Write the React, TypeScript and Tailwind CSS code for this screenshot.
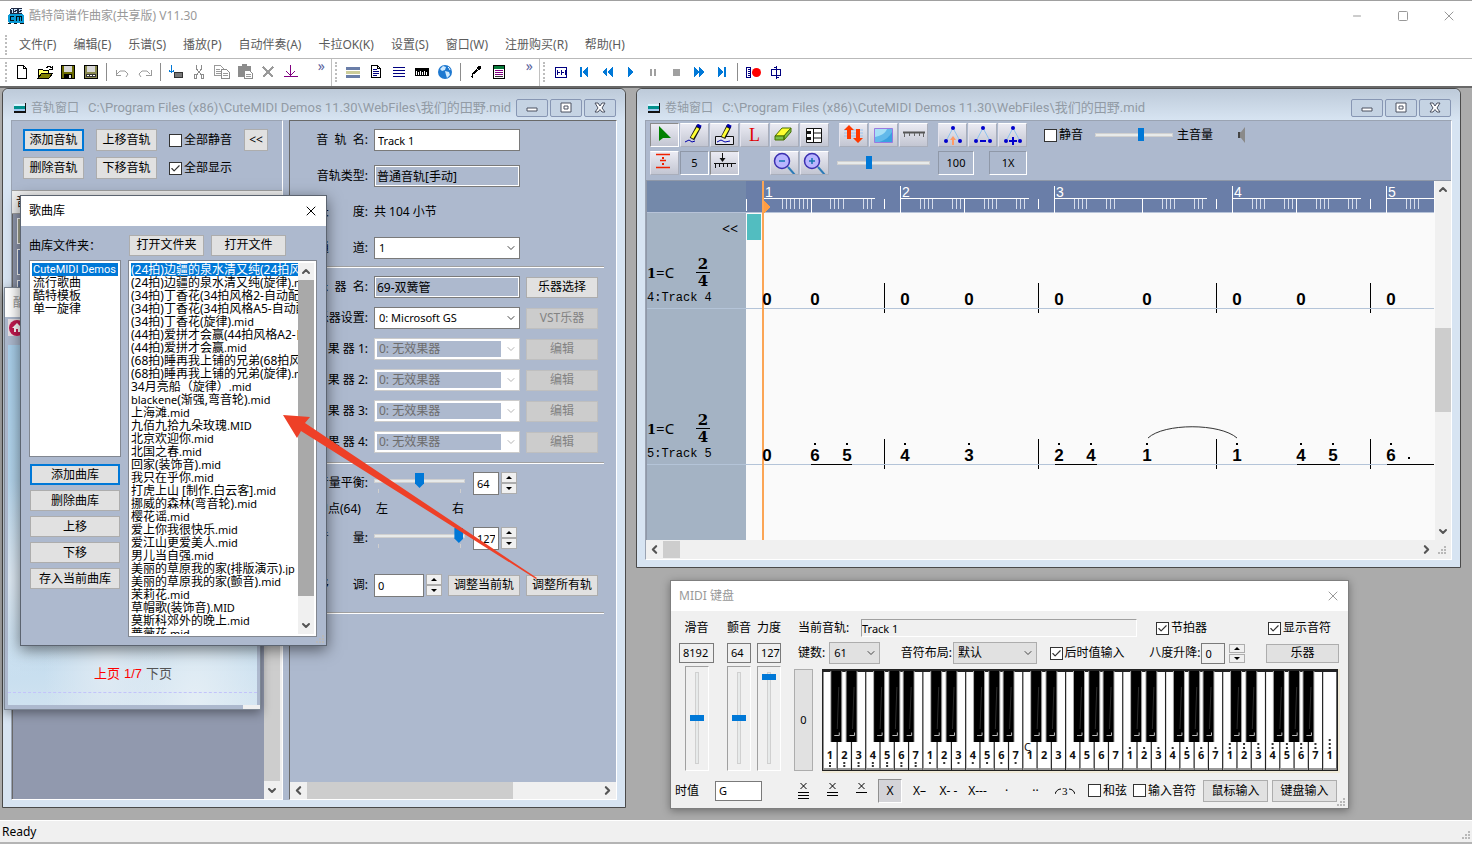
import { ReactNode } from "react";
import { ChevronDown, ChevronLeft, ChevronRight, ChevronUp, Check, Minus, Square, X } from "lucide-react";
import clsx from "clsx";
import { twMerge } from "tailwind-merge";

const MENUS = ["文件(F)", "编辑(E)", "乐谱(S)", "播放(P)", "自动伴奏(A)", "卡拉OK(K)", "设置(S)", "窗口(W)", "注册购买(R)", "帮助(H)"];

const FOLDERS = ["CuteMIDI Demos 1", "流行歌曲", "酷特模板", "单一旋律"];

const SONGS = [
  "(24拍)边疆的泉水清又纯(24拍风格).mid",
  "(24拍)边疆的泉水清又纯(旋律).mid",
  "(34拍)丁香花(34拍风格2-自动配器).mid",
  "(34拍)丁香花(34拍风格A5-自动配器).mid",
  "(34拍)丁香花(旋律).mid",
  "(44拍)爱拼才会赢(44拍风格A2-自动).mid",
  "(44拍)爱拼才会赢.mid",
  "(68拍)睡再我上铺的兄弟(68拍风格).mid",
  "(68拍)睡再我上铺的兄弟(旋律).mid",
  "34月亮船（旋律）.mid",
  "blackene(渐强,弯音轮).mid",
  "上海滩.mid",
  "九佰九拾九朵玫瑰.MID",
  "北京欢迎你.mid",
  "北国之春.mid",
  "回家(装饰音).mid",
  "我只在乎你.mid",
  "打虎上山 [制作.白云客].mid",
  "挪威的森林(弯音轮).mid",
  "樱花谣.mid",
  "爱上你我很快乐.mid",
  "爱江山更爱美人.mid",
  "男儿当自强.mid",
  "美丽的草原我的家(排版演示).jp",
  "美丽的草原我的家(颤音).mid",
  "茉莉花.mid",
  "草帽歌(装饰音).MID",
  "莫斯科郊外的晚上.mid",
  "蔷薇花.mid",
];

// x positions are measured from the left edge of the staff area
const BARS = [
  { n: 1, x: 17, end: 129, beat: 65, ticks: [36, 40, 44, 48, 53, 57, 61, 84, 88, 92, 97, 117, 121, 125] },
  { n: 2, x: 154, end: 283, beat: 218, ticks: [174, 178, 182, 186, 206, 210, 214, 238, 242, 246, 250, 270, 274, 278] },
  { n: 3, x: 308, end: 461, beat: 396, ticks: [328, 332, 336, 340, 360, 364, 368, 416, 420, 424, 428, 448, 452, 456] },
  { n: 4, x: 486, end: 615, beat: 550, ticks: [506, 510, 514, 518, 538, 542, 546, 570, 574, 578, 582, 602, 606, 610] },
  { n: 5, x: 640, end: 688, beat: 0, ticks: [660, 664, 668, 672] },
];
const BAR_LINES = [138, 292, 470, 624];
const RESTS = [21, 69, 159, 223, 313, 401, 491, 555, 645];
const NOTES: [number, string, boolean][] = [
  [21, "0", false], [69, "6", true], [101, "5", true], [159, "4", true], [223, "3", true], [313, "2", true],
  [345, "4", true], [401, "1", true], [491, "1", true], [555, "4", true], [587, "5", true], [645, "6", true],
];
const BEAMS = [[65, 106], [309, 351], [551, 594], [641, 688]];

const btn = "flex items-center justify-center border border-[#adadad] bg-[#e1e1e1] whitespace-nowrap";
const field = "border border-[#7a7a7a] bg-white px-[3px] text-[11px] min-w-0";
const btnOff = "w-[72px] h-[21px] bg-[#ccc] border-[#bfbfbf] text-[#838383]";

export default function App() {
  return (
    <div className="min-h-screen flex flex-col bg-white text-black text-[12px] leading-[16px] font-['Noto_Sans','Noto_Sans_CJK_SC',sans-serif] overflow-hidden">
      <TitleBar />
      <nav className="h-[28px] flex items-center border-b border-[#b9b9b9] pl-[5px] text-[#5c5c5c]">
        <Grip />
        <div className="flex gap-px pl-[4px]">
          {MENUS.map((m) => (
            <button key={m} className="px-2 whitespace-nowrap">{m}</button>
          ))}
        </div>
      </nav>
      <MainToolbar />

      {/* MDI desktop */}
      <main className="relative flex-1 min-h-[731px] overflow-hidden bg-[#ababab] border-t-2 border-[#696969]">
        <TrackWindow />
        <ScoreWindow />
        <KeyboardWindow />
        <BrowserWindow />
        <LibraryDialog />
        <svg className="absolute left-[280px] top-[324px] w-[262px] h-[170px] pointer-events-none" viewBox="0 0 262 170">
          <path d="M3 3 30 5 25 11 257 166 256 167 21 19 17 26Z" fill="#ee4027" />
        </svg>
      </main>

      <footer className="h-[24px] flex flex-col justify-between bg-[#f0f0f0] border-t border-white">
        <div className="flex justify-between">
          <span className="pl-[2px] pt-[2px] leading-[18px]">Ready</span>
          <SizeGrip />
        </div>
        <div className="h-[2px] bg-[#b4b4b4]" />
      </footer>
    </div>
  );
}

function TitleBar() {
  return (
    <header className="h-[31px] flex items-center border-t border-[#a0a0a0] pl-2 text-[#999]">
      <svg className="w-4 h-4 mr-[5px]" viewBox="0 0 16 16" shapeRendering="crispEdges">
        <path d="M3 0h11v6H2V3z" fill="#1f2a44" />
        <path d="M3 1h2v4H4V2H3zM6 1h3v1H7v1h2v2H6V4h2V3H6zM11 1h3v1h-2v1h2v2h-3V4h2V3h-2z" fill="#cfe8ff" />
        <path d="M1 6h14l1 2v6l-1 1H1l-1-1V8z" fill="#0b9bd6" />
        <path d="M2 8h4v1H3v3h3v1H2zM8 8h6v5h-1V9h-1v4h-1V9H9v4H8z" fill="#001018" />
        <path d="M0 15h3v1H0zM6 15h3v1H6zM12 15h4v1h-4z" fill="#111" />
      </svg>
      <h1 className="flex-1">酷特简谱作曲家(共享版) V11.30</h1>
      <button className="w-[46px] flex justify-center" aria-label="最小化"><Minus className="w-3 h-3" strokeWidth={2} /></button>
      <button className="w-[46px] flex justify-center" aria-label="最大化"><Square className="w-3 h-3" strokeWidth={2} /></button>
      <button className="w-[46px] flex justify-center" aria-label="关闭"><X className="w-4 h-4" strokeWidth={1.500} /></button>
    </header>
  );
}

function Grip() {
  return <span className="h-5 border-l-2 border-dotted border-[#bdbdbd]" />;
}

function Tool({ label, children }: { label: string; children: ReactNode }) {
  return (
    <button aria-label={label} className="w-[23px] h-[24px] flex items-center justify-center">
      <svg className="w-4 h-4" viewBox="0 0 16 16" fill="none" shapeRendering="crispEdges">{children}</svg>
    </button>
  );
}

function Sep() {
  return <span className="w-2 flex justify-center"><span className="h-[18px] w-px bg-[#8c8c8c]" /></span>;
}

function More() {
  return <button aria-label="更多" className="self-start text-[14px] leading-[14px] text-[#5a5f9c]">»</button>;
}

function MainToolbar() {
  return (
    <div className="h-[27px] flex items-center">
      <div className="w-[332px] h-full flex items-center border-r border-[#c0c0c0] pl-[5px] pb-px">
        <Grip />
        <div className="flex items-center pl-[3px] flex-1">
          <Tool label="新建"><path d="M3.500 1.500h6l3 3v10h-9zM9.500 1.500v3h3" stroke="#000" fill="#fff" /></Tool>
          <Tool label="打开">
            <path d="M1 5h4l1 1h5v3H5l-4 5z" fill="#ffff66" stroke="#000" />
            <path d="M1 14l4-5h11l-4 5z" fill="#808000" stroke="#000" />
            <path d="M9 3h1V2h3v1h1v1M15 2v3h-3" stroke="#000" />
          </Tool>
          <Tool label="保存">
            <path d="M1.500 1.500h13v13h-13z" fill="#6b6b00" stroke="#000" />
            <path d="M4 2h8v6H4z" fill="#d8d8d8" /><path d="M4 10h8v4H4z" fill="#000" /><path d="M9 11h2v3H9z" fill="#ddd" />
          </Tool>
          <Tool label="另存">
            <path d="M1.500 1.500h13v13h-13z" fill="#8a8a50" stroke="#000" />
            <path d="M4 2h8v6H4z" fill="#d8d8d8" /><path d="M3 10h10v3H3z" fill="#333" /><path d="M4 11h2v1H4zM7 11h2v1H7zM10 11h2v1h-2z" fill="#fff" />
          </Tool>
          <Sep />
          <Tool label="撤销"><path d="M2 6v5h5" stroke="#9a9a9a" /><path d="M3 10l3-3h5l3 3-2 3" stroke="#9a9a9a" shapeRendering="auto" /></Tool>
          <Tool label="重做"><path d="M14 6v5H9" stroke="#9a9a9a" /><path d="M13 10l-3-3H5l-3 3 2 3" stroke="#9a9a9a" shapeRendering="auto" /></Tool>
          <Sep />
          <Tool label="插入">
            <path d="M6.500 8.500h8v5h-8z" fill="#777" stroke="#333" />
            <path d="M3.500 1v8M1 6.500l2.500 2L6 6.500" stroke="#0078d7" />
          </Tool>
          <Tool label="剪切">
            <path d="M5.500 1v4l5 6M10.500 1v4l-5 6" stroke="#8c8c8c" />
            <path d="M3.500 10.500h2v4h-2zM10.500 10.500h2v4h-2z" stroke="#8c8c8c" />
          </Tool>
          <Tool label="复制">
            <path d="M.5 1.500h6l3 3v7h-9zM2 5h4M2 7h5M2 9h5" stroke="#9a9a9a" />
            <path d="M7.500 5.500h5l3 3v6h-8z" fill="#fff" stroke="#8c8c8c" /><path d="M9 9.500h5M9 11.500h5" stroke="#9a9a9a" />
          </Tool>
          <Tool label="粘贴">
            <path d="M1 2h13v11H1zM5 0h5v3H5z" fill="#8c8c8c" />
            <path d="M7.500 6.500h5l3 3v5h-8z" fill="#fff" stroke="#8c8c8c" /><path d="M9 10.500h5M9 12.500h5" stroke="#9a9a9a" />
          </Tool>
          <Tool label="删除"><path d="M3 3l10 10M13 3L3 13" stroke="#9a9a9a" strokeWidth="1.500" /></Tool>
          <Tool label="导出"><path d="M1 12.500h14M7.500 1v10M3.500 7.500l4 4 4-4" stroke="#800080" /></Tool>
        </div>
        <div className="h-full pr-[6px] flex"><More /></div>
      </div>
      <div className="w-[208px] h-full flex items-center border-r border-[#c0c0c0] pl-[3px] pb-px">
        <Grip />
        <div className="flex items-center pl-1 flex-1">
          <Tool label="音轨"><path d="M1 3h14v3H1z" fill="#6a7ea8" /><path d="M1 7h14v3H1z" fill="#cccc99" /><path d="M1 11h14v3H1z" fill="#6a7ea8" /></Tool>
          <Tool label="文档"><path d="M3.500 1.500h6l3 3v9h-9zM9.500 1.500v3h3" stroke="#000" /><path d="M5 5.500h4M5 7.500h6M5 9.500h6M5 11.500h4" stroke="#000080" /></Tool>
          <Tool label="歌词"><path d="M2 3.500h12M2 6.500h12M2 9.500h12M2 12.500h12" stroke="#000080" /></Tool>
          <Tool label="键盘"><path d="M1 4h14v8H1z" fill="#000" /><path d="M2 7h1v4H2zM4 8h1v3H4zM6 7h1v4H6zM8 8h1v3H8zM10 7h1v4h-1zM12 8h1v3h-1z" fill="#fff" /></Tool>
          <Tool label="网络">
            <circle cx="8" cy="8" r="7" fill="#1d78d0" shapeRendering="auto" />
            <path d="M3 5l3-3 3 1-1 3-3 1zM8 7l4 1 1 3-3 3-1-3z" fill="#cfeaff" shapeRendering="auto" />
            <path d="M11 3a6 6 0 012 3" stroke="#fff" shapeRendering="auto" />
          </Tool>
          <Sep />
          <Tool label="录音"><path d="M10 2h3v3h-1v1h-2V5H9V3h1zM8 5h1v1h1v1H9v1H8v1H7v1H5v4H4v-1H3v-1h1V9h1V8h1V7h1V6h1z" fill="#000" /></Tool>
          <Tool label="乐谱">
            <path d="M2.500 1.500h11v13h-11z" stroke="#000" /><path d="M3 2h10v3H3z" fill="#087a3a" />
            <path d="M4 6.500h8M4 8.500h8M4 10.500h8" stroke="#800080" /><path d="M4 12.500h8" stroke="#333" />
          </Tool>
        </div>
        <div className="h-full pr-[6px] flex"><More /></div>
      </div>
      <div className="h-full flex items-center pl-[3px] pb-px">
        <Grip />
        <div className="flex items-center pl-1">
          <Tool label="定位"><path d="M2.500 3.500h11v10h-11zM4 6v5M12 6v5M5 8.500h2M9 8.500h2M8 6v5" stroke="#000080" /></Tool>
          <Tool label="开头"><path d="M4 3h2v10H4zM12 3v10L6 8z" fill="#0078d7" /></Tool>
          <Tool label="快退"><path d="M8 3v10L3 8zM14 3v10L8 8z" fill="#0078d7" /></Tool>
          <Tool label="播放"><path d="M6 3v10l5-5z" fill="#0078d7" /></Tool>
          <Tool label="暂停"><path d="M5 5h2v7H5zM9 5h2v7H9z" fill="#a0a0a0" /></Tool>
          <Tool label="停止"><path d="M5 5h7v7H5z" fill="#a0a0a0" /></Tool>
          <Tool label="快进"><path d="M3 3v10l5-5zM8 3v10l6-5z" fill="#0078d7" /></Tool>
          <Tool label="结尾"><path d="M10 3h2v10h-2zM4 3v10l6-5z" fill="#0078d7" /></Tool>
          <Sep />
          <Tool label="录制"><path d="M1.500 3.500h4v10h-4zM3 5.500h2M3 7.500h2M3 9.500h2M3 11.500h2" stroke="#000080" /><circle cx="11.500" cy="8.500" r="4.500" fill="#f00" shapeRendering="auto" /></Tool>
          <Tool label="循环"><path d="M3.500 5.500h9v6h-9zM8.500 2v13M6 3.500h3M8 13.500h3" stroke="#000080" /></Tool>
        </div>
      </div>
    </div>
  );
}

function SizeGrip() {
  return (
    <svg className="w-[10px] h-[10px] self-end shrink-0" viewBox="0 0 10 10" fill="#b8b8b8" shapeRendering="crispEdges">
      <path d="M6 0h2v2H6zM3 3h2v2H3zM6 3h2v2H6zM0 6h2v2H0zM3 6h2v2H3zM6 6h2v2H6z" />
    </svg>
  );
}

function MdiWindow({ title, path, place, children }: { title: string; path: string; place: string; children: ReactNode }) {
  return (
    <section className={clsx("absolute flex flex-col border border-[#4a4a4a] rounded-t-[6px] bg-[#d7e4f2]", place)}>
      <div className="h-[31px] shrink-0 flex items-center pl-[11px] pr-[9px] pt-[6px] rounded-t-[6px] bg-gradient-to-b from-[#bdcad9] to-[#d7e4f2] text-[#929ba5]">
        <svg className="w-3 h-3 mr-[5px]" viewBox="0 0 12 12" shapeRendering="crispEdges">
          <path d="M0 2h11v2H0z" fill="#d8f4ff" /><path d="M0 4h11v3H0z" fill="#00908c" />
          <path d="M0 7h11v2H0z" fill="#9fc8f0" /><path d="M0 9h12v2H0zM11 1h1v10h-1z" fill="#111" />
        </svg>
        <h2 className="flex-1 flex gap-[9px] whitespace-nowrap">
          <span>{title}</span>
          <span className="text-[13px] font-['Roboto','Noto_Sans_CJK_SC',sans-serif]">{path}</span>
        </h2>
        <div className="flex gap-[2px]">
          {["最小化", "最大化", "关闭"].map((b, i) => (
            <button key={b} aria-label={b} className="w-8 h-[18px] flex items-center justify-center border border-[#8796b3] rounded-[2px] bg-[#c5d3e3]">
              <svg className="w-3 h-3" viewBox="0 0 12 12" fill="#fff" stroke="#4a5060">
                {i === 0 && <path d="M1 6h10v3H1z" />}
                {i === 1 && <path d="M1 1h10v9H1zM4 4h4v3H4z" />}
                {i === 2 && <path d="M1 1h3l2 3 2-3h3L8 6l3 4H8L6 7.500 4 10H1l3-4z" />}
              </svg>
            </button>
          ))}
        </div>
      </div>
      <div className="flex-1 min-h-0 flex pl-2 pr-2 pb-[7px]">{children}</div>
    </section>
  );
}

function VScroll({ className, thumb }: { className?: string; thumb: string }) {
  return (
    <div className={clsx("w-4 shrink-0 flex flex-col bg-[#f0f0f0] text-[#555]", className)}>
      <ChevronUp className="w-4 h-[17px] p-[2px]" strokeWidth={4} />
      <div className="flex-1 flex flex-col"><div className={twMerge("bg-[#cdcdcd]", thumb)} /></div>
      <ChevronDown className="w-4 h-[17px] p-[2px]" strokeWidth={4} />
    </div>
  );
}

function HScroll({ thumb }: { thumb: string }) {
  return (
    <div className="h-[17px] shrink-0 flex-1 flex bg-[#f0f0f0] text-[#555]">
      <ChevronLeft className="w-[17px] h-[17px] p-[2px]" strokeWidth={4} />
      <div className="flex-1 flex"><div className={clsx("bg-[#cdcdcd]", thumb)} /></div>
      <ChevronRight className="w-[17px] h-[17px] p-[2px]" strokeWidth={4} />
    </div>
  );
}

function CheckBox({ label, checked = false }: { label: string; checked?: boolean }) {
  return (
    <label className="flex items-center gap-[2px] whitespace-nowrap">
      <span className="grid w-[13px] h-[13px]">
        <input type="checkbox" defaultChecked={checked} className="peer appearance-none col-start-1 row-start-1 w-[13px] h-[13px] border border-[#333] bg-white" />
        <Check className="col-start-1 row-start-1 w-[13px] h-[13px] p-px text-[#333] invisible peer-checked:visible pointer-events-none" strokeWidth={2.5} />
      </span>
      {label}
    </label>
  );
}

function Drop({ id, value, disabled = false, gray = false, small = false, className }: { id: string; value: string; disabled?: boolean; gray?: boolean; small?: boolean; className?: string }) {
  return (
    <span className={twMerge("grid h-[22px] items-center border border-[#7a7a7a] bg-white", disabled && "border-[#ccc]", gray && "border-[#adadad] bg-[#e1e1e1]", className)}>
      <select
        id={id}
        disabled={disabled}
        className={twMerge(
          "appearance-none col-start-1 row-start-1 bg-transparent pl-[4px] h-[20px] leading-[16px] text-black",
          small && "text-[11px]",
          disabled && "h-[16px] ml-[2px] mr-[18px] pl-[2px] bg-[#adb9ce] text-[#6d6d6d] opacity-100",
        )}
      >
        <option>{value}</option>
      </select>
      <ChevronDown className={clsx("col-start-1 row-start-1 justify-self-end mr-[2px] w-3 h-3 pointer-events-none", disabled ? "text-[#b5b5b5]" : "text-[#444]")} />
    </span>
  );
}

function Spin({ narrow = false }: { narrow?: boolean }) {
  return (
    <span className={clsx("flex flex-col justify-between w-4 shrink-0", narrow ? "h-[19px]" : "h-[22px]")}>
      {["M1 4l3-3 3 3z", "M1 1l3 3 3-3z"].map((d, i) => (
        <button key={d} aria-label={i ? "减" : "加"} className={clsx("flex items-center justify-center border border-[#adadad] bg-[#f0f0f0]", narrow ? "h-[9px]" : "h-[11px]")}>
          <svg className="w-2 h-[5px]" viewBox="0 0 8 5"><path d={d} fill="#000" /></svg>
        </button>
      ))}
    </span>
  );
}

function HSlider({ label, value, max, width, thumb }: { label: string; value: number; max: number; width: string; thumb: "pin" | "bar" }) {
  return (
    <input
      type="range"
      aria-label={label}
      defaultValue={value}
      max={max}
      className={clsx(
        "appearance-none bg-transparent h-4 [&::-webkit-slider-runnable-track]:h-1 [&::-webkit-slider-runnable-track]:bg-[#e7eaea] [&::-webkit-slider-runnable-track]:border [&::-webkit-slider-runnable-track]:border-[#d0d0d0] [&::-webkit-slider-thumb]:appearance-none [&::-webkit-slider-thumb]:bg-[#0078d7]",
        width,
        thumb === "pin"
          ? "[&::-webkit-slider-thumb]:w-[9px] [&::-webkit-slider-thumb]:h-[15px] [&::-webkit-slider-thumb]:-mt-[7px] [&::-webkit-slider-thumb]:[clip-path:polygon(0_0,100%_0,100%_70%,50%_100%,0_70%)]"
          : "[&::-webkit-slider-thumb]:w-[6px] [&::-webkit-slider-thumb]:h-[13px] [&::-webkit-slider-thumb]:-mt-[6px]",
      )}
    />
  );
}

function TrackWindow() {
  return (
    <MdiWindow title="音轨窗口" path="C:\Program Files (x86)\CuteMIDI Demos 11.30\WebFiles\我们的田野.mid" place="left-[2px] top-0 w-[624px] h-[720px]">
      <div className="w-[272px] shrink-0 flex flex-col bg-[#adb9ce] border border-t-[#9aa3b2] border-l-[#9aa3b2] border-white">
        <div className="h-[69px] flex pl-[11px] pt-2 gap-3">
          {[["添加音轨", "删除音轨"], ["上移音轨", "下移音轨"]].map((col, i) => (
            <div key={i} className="flex flex-col gap-[6px]">
              {col.map((t) => (
                <button key={t} className={twMerge(btn, "w-[61px] h-[22px]", t === "添加音轨" && "border-2 border-[#0078d7]")}>{t}</button>
              ))}
            </div>
          ))}
          <div className="flex flex-col gap-3 pt-[3px]">
            <CheckBox label="全部静音" />
            <CheckBox label="全部显示" checked />
          </div>
          <button className={clsx(btn, "w-6 h-[22px]")}>&lt;&lt;</button>
        </div>
        <div className="h-6 bg-[#f0f0f0] border-y border-[#a0a0a0] px-1 leading-[22px]">音轨</div>
        <div className="flex-1 flex">
          <div className="flex-1 flex flex-col gap-[5px] p-1 bg-[#9199ae] border-l border-[#696969]">
            <div className="h-[26px] w-[120px] border border-white bg-[#a4a68f]" />
            <div className="h-[26px] w-[120px] border border-white bg-[#6a7ea8]" />
            <div className="h-[26px] w-[120px] border border-white bg-[#6a7ea8]" />
          </div>
          <VScroll thumb="h-[550px]" />
          <div className="w-[2px] bg-[#f0f0f0]" />
        </div>
      </div>
      <div className="w-[6px] shrink-0 bg-[#adb9ce]" />
      <TrackForm />
    </MdiWindow>
  );
}

function Row({ label, id, children }: { label: string; id?: string; children: ReactNode }) {
  return (
    <div className="h-[22px] flex items-center gap-[6px]">
      <label htmlFor={id} className="w-[78px] shrink-0 text-right whitespace-pre">{label}</label>
      {children}
    </div>
  );
}

function Groove() {
  return <hr className="w-[314px] shrink-0 border-t border-t-[#a0a0a0] border-b border-b-white h-[2px]" />;
}

function TrackForm() {
  return (
    <div className="flex-1 min-w-0 flex flex-col bg-[#adb9ce] border border-t-[#696969] border-l-[#696969] border-white">
      <div className="flex flex-col gap-[14px] pt-2 pb-[7px]">
        <Row id="name" label="音  轨  名:"><input id="name" defaultValue="Track 1" className={clsx(field, "w-[146px] h-[22px]")} /></Row>
        <Row id="kind" label="音轨类型:"><input id="kind" readOnly defaultValue="普通音轨[手动]" className="w-[146px] h-[22px] px-[2px] border border-[#7a7a7a] bg-[#adb9ce] shadow-[inset_0_0_0_1px_white]" /></Row>
        <Row label="长　　度:"><span>共 104 小节</span></Row>
        <Row id="channel" label="通　　道:"><Drop id="channel" value="1" small className="w-[146px]" /></Row>
      </div>
      <Groove />
      <div className="flex flex-col gap-[9px] pt-2 pb-[9px]">
        <Row id="inst" label="乐  器  名:">
          <input id="inst" readOnly defaultValue="69-双簧管" className="w-[146px] h-[22px] px-[2px] border border-[#7a7a7a] bg-[#adb9ce] shadow-[inset_0_0_0_1px_white]" />
          <button className={clsx(btn, "w-[72px] h-[21px]")}>乐器选择</button>
        </Row>
        <Row id="device" label="乐器设置:">
          <Drop id="device" value="0: Microsoft GS" small className="w-[146px]" />
          <button disabled className={twMerge(btn, btnOff)}>VST乐器</button>
        </Row>
        {[1, 2, 3, 4].map((n) => (
          <Row key={n} id={`fx${n}`} label={`效 果 器 ${n}:`}>
            <Drop id={`fx${n}`} value="0: 无效果器" disabled className="w-[146px]" />
            <button disabled className={twMerge(btn, btnOff)}>编辑</button>
          </Row>
        ))}
      </div>
      <Groove />
      <div className="flex flex-col pt-2 pb-4">
        <Row label="音量平衡:">
          <Level label="音量平衡" value={64} />
        </Row>
        <div className="h-[33px] flex items-center pl-[26px] pb-1">
          <span className="w-[60px]">中点(64)</span>
          <span className="w-[76px]">左</span>
          <span>右</span>
        </div>
        <Row label="音　　量:">
          <Level label="音量" value={127} />
        </Row>
        <div className="h-[25px]" />
        <Row id="shift" label="移　　调:">
          <div className="flex gap-[2px]">
            <input id="shift" defaultValue="0" className={clsx(field, "w-[50px] h-[23px]")} />
            <Spin />
          </div>
          <button className={clsx(btn, "w-[72px] h-[21px]")}>调整当前轨</button>
          <button className={clsx(btn, "w-[72px] h-[21px]")}>调整所有轨</button>
        </Row>
      </div>
      <Groove />
      <div className="mt-auto flex"><HScroll thumb="w-[206px]" /></div>
    </div>
  );
}

function Level({ label, value }: { label: string; value: number }) {
  return (
    <>
      <div className="flex flex-col w-[91px]">
        <HSlider label={label} value={value} max={128} width="w-[91px]" thumb="pin" />
        <div className="flex justify-between px-1">
          <span className="w-px h-1 bg-[#d0cfcf]" />
          <span className="w-px h-1 bg-[#d0cfcf]" />
        </div>
      </div>
      <div className="flex gap-[2px] pl-[2px]">
        <input aria-label={label} defaultValue={value} className={clsx(field, "w-[26px] h-[23px]")} />
        <Spin />
      </div>
    </>
  );
}

function IconButton({ label, on = false, children }: { label: string; on?: boolean; children: ReactNode }) {
  return (
    <button
      aria-label={label}
      className={clsx(
        "w-[29px] h-6 flex items-center justify-center bg-gradient-to-b from-[#ebebf3] to-[#c3c6d2] border",
        on ? "border-t-[#8a8a8a] border-l-[#8a8a8a] border-white" : "border-t-white border-l-[#e4e4ee] border-[#a9aebb]",
      )}
    >
      <svg className="w-[27px] h-[22px]" viewBox="0 0 27 22" fill="none">{children}</svg>
    </button>
  );
}

function Triplet({ children }: { children: ReactNode }) {
  return (
    <>
      <path d="M14 4L7 17M14 4l7 13" stroke="#8fc3ee" />
      <circle cx="14" cy="4" r="2" fill="#00c" /><circle cx="7" cy="17" r="2" fill="#00c" /><circle cx="21" cy="17" r="2" fill="#00c" />
      {children}
    </>
  );
}

function Magnifier({ plus = false }: { plus?: boolean }) {
  return (
    <>
      <path d="M17 15l7 8" stroke="#2b7bb8" strokeWidth="2" />
      <circle cx="11" cy="9" r="7.500" fill="#b9b5ff" stroke="#3a2fb0" strokeWidth="1.500" />
      <path d={plus ? "M8 9h6M11 6v6" : "M8 9h6"} stroke="#1474b0" strokeWidth="1.500" />
    </>
  );
}

function ScoreWindow() {
  return (
    <MdiWindow title="卷轴窗口" path="C:\Program Files (x86)\CuteMIDI Demos 11.30\WebFiles\我们的田野.mid" place="left-[636px] top-0 w-[825px] h-[480px]">
      <div className="flex-1 min-w-0 flex flex-col border border-t-[#9aa3b2] border-l-[#9aa3b2] border-white bg-[#f0f0f0]">
        <div className="h-[60px] shrink-0 flex flex-col gap-1 pl-1 pt-[2px] bg-[#adb9ce] border-b border-[#8f98a8]">
          <div className="h-6 flex items-center gap-[10px]">
            <div className="flex gap-px">
              <IconButton label="选择" on><path d="M8 2v15l4-3 8 0z" fill="#008000" /></IconButton>
              <IconButton label="铅笔"><path d="M18 2l-7 13" stroke="#111" strokeWidth="5" /><path d="M17 4l-6 10" stroke="#ff3" strokeWidth="3" /><path d="M16 1l4 2" stroke="#00a" strokeWidth="3" /><path d="M4 18l4-2 3 2 3-1" stroke="#00a" /></IconButton>
              <IconButton label="画框"><path d="M4.500 12.500h18v8h-18z" stroke="#111" fill="#e4e4ee" /><path d="M18 2l-6 12" stroke="#111" strokeWidth="5" /><path d="M17 4l-5 9" stroke="#ff3" strokeWidth="3" /><path d="M16 1l4 2" stroke="#00a" strokeWidth="3" /><path d="M6 18l4-2 4 2 5-1" stroke="#00a" /></IconButton>
              <IconButton label="歌词"><text x="8" y="17" fontSize="18" fontFamily="Liberation Serif" fill="#e00000">L</text></IconButton>
              <IconButton label="橡皮"><path d="M4 12l7-8h9l-7 8z" fill="#ffff30" stroke="#487000" /><path d="M4 12h9v4H4zM13 12l7-8v4l-7 8z" fill="#7bbf4a" stroke="#487000" /></IconButton>
              <IconButton label="琴键"><path d="M5.500 4.500h15v14h-15z" fill="#fff" stroke="#111" /><path d="M12.500 4v14M13 9h8M13 14h8" stroke="#111" /><path d="M5 7h5v3H5zM5 13h5v3H5z" fill="#111" /></IconButton>
            </div>
            <div className="flex gap-px">
              <IconButton label="上下移"><path d="M4 6h19M4 9h19M4 12h19" stroke="#9cc4ee" /><path d="M9 1l5 5h-3v9H7V6H4zM18 19l-5-5h3V5h4v9h3z" fill="#ff3a00" /></IconButton>
              <IconButton label="背景"><path d="M4.500 4.500h18v14h-18z" fill="#62b9ea" stroke="#9a7ae0" /><path d="M5 5h12c-2 5-7 7-12 8z" fill="#a5dff6" /><path d="M22 8v10H9c7-2 10-5 13-10z" fill="#3aa0e0" /></IconButton>
              <IconButton label="标尺"><path d="M3 8.500h22" stroke="#555" strokeWidth="2" /><path d="M4.500 9v4M9.500 9v3M14.500 9v3M19.500 9v3M23.500 9v4" stroke="#666" /></IconButton>
            </div>
            <div className="flex gap-px">
              <IconButton label="移动"><Triplet><path d="M14 12l3 4h-2v5h-2v-5h-2z" fill="#ff9a66" /></Triplet></IconButton>
              <IconButton label="减少"><Triplet><path d="M11 17h6" stroke="#00c" strokeWidth="2" /></Triplet></IconButton>
              <IconButton label="增加"><Triplet><path d="M10 17h8M14 13v8" stroke="#00c" strokeWidth="2" /></Triplet></IconButton>
            </div>
            <div className="flex items-center gap-3 pl-[7px]">
              <CheckBox label="静音" />
              <div className="flex items-center gap-1">
                <HSlider label="主音量" value={60} max={100} width="w-[78px]" thumb="bar" />
                <span>主音量</span>
              </div>
            </div>
            <svg className="w-4 h-4 ml-3" viewBox="0 0 16 16"><path d="M3 5h3l4-5v16l-4-5H3z" fill="#8a8a8a" /><path d="M3 5h2v6H3z" fill="#444" /></svg>
          </div>
          <div className="h-[24px] flex items-center">
            <div className="flex gap-px">
              <IconButton label="行距"><path d="M5 2.500h14M9 8.500h6M5 15.500h14" stroke="#f02000" strokeWidth="1.500" /><path d="M11 5h2v2h-2zM11 11h2v2h-2z" fill="#f02000" /></IconButton>
              <span className="w-[29px] flex items-center justify-center border border-t-[#8f98a8] border-l-[#8f98a8] border-white text-[11px]">5</span>
              <IconButton label="拍点" on><path d="M3 11.500h22M4.500 12v4M8.500 12v3M12.500 12v3M16.500 12v3M20.500 12v3" stroke="#111" /><path d="M11.500 1v6" stroke="#111" /><path d="M8.500 6h6l-3 4z" fill="#111" /></IconButton>
            </div>
            <div className="flex gap-px pl-[31px]">
              <IconButton label="缩小"><Magnifier /></IconButton>
              <IconButton label="放大"><Magnifier plus /></IconButton>
            </div>
            <div className="flex items-center gap-2 pl-2 text-[11px]">
              <HSlider label="缩放" value={33} max={100} width="w-[93px]" thumb="bar" />
              <span className="w-9 h-6 flex items-center justify-center border border-t-[#8f98a8] border-l-[#8f98a8] border-white">100</span>
              <span className="w-[38px] ml-[7px] h-6 flex items-center justify-center border border-t-[#8f98a8] border-l-[#8f98a8] border-white">1X</span>
            </div>
          </div>
        </div>
        <div className="flex-1 flex min-h-0">
          <div className="w-[100px] shrink-0 flex flex-col bg-[#a4b3c4] border-l border-[#8f98a8]">
            <div className="h-8 bg-[#7489aa] border-b border-[#b7c3d8]" />
            <div className="h-7 flex items-end justify-end pr-2 text-[14px] leading-[24px]">&lt;&lt;</div>
            <TrackHead name="4:Track 4" className="h-[68px]" />
            <TrackHead name="5:Track 5" className="h-[156px]" />
          </div>
          <Score />
          <VScroll thumb="h-[84px] mt-[130px]" />
        </div>
        <div className="flex h-[19px] pt-px">
          <HScroll thumb="w-[17px]" />
          <div className="w-4 flex justify-center pb-[3px]"><SizeGrip /></div>
        </div>
      </div>
    </MdiWindow>
  );
}

function TrackHead({ name, className }: { name: string; className: string }) {
  return (
    <div className={clsx("flex flex-col justify-end border-b border-[#b4c4d8]", className)}>
      <div className="flex items-center gap-[15px]">
        <span className="w-[34px] text-[15px]"><b className="font-['DejaVu_Serif',serif] text-[13px]">1</b>=C</span>
        <span className="w-[14px] flex flex-col items-center font-['DejaVu_Serif',serif] font-bold text-[15px] leading-[16px]">
          <span className="border-b border-black w-full text-center">2</span>
          <span>4</span>
        </span>
      </div>
      <span className="pt-px pb-[2px] font-['Liberation_Mono',monospace] text-[12px]">{name}</span>
    </div>
  );
}

function Score() {
  return (
    <div className="flex-1 min-w-0 overflow-hidden bg-[#fafafa]">
      <svg className="w-[688px] h-[360px]" viewBox="0 0 688 360" shapeRendering="crispEdges">
        <rect width="688" height="31" fill="#6a7ea8" />
        <rect y="31" width="688" height="1" fill="#b7c3d8" />
        <path d="M.5 18v12" stroke="#fff" />
        {BARS.map((b) => (
          <g key={b.n} stroke="#fff">
            <path d={`M${b.x + 0.5} 5v27M${b.x} 17.500H${b.end}`} />
            {b.beat > 0 && <path d={`M${b.beat + 0.5} 18v14`} />}
            {b.ticks.map((t) => <path key={t} d={`M${t + 0.5} 18v10`} stroke="#d5dceb" />)}
            <text x={b.x + 2} y="16" fontSize="14" fontFamily="Liberation Sans" fill="#fff" stroke="none">{b.n}</text>
          </g>
        ))}
        {BAR_LINES.map((x) => (
          <g key={x}>
            <path d={`M${x + 0.5} 18v10`} stroke="#fff" />
            <path d={`M${x + 0.5} 102v30M${x + 0.5} 258v30`} stroke="#000" />
          </g>
        ))}
        <rect x="1" y="33" width="14" height="26" fill="#52bdc0" />
        <path d="M0 127.500h688M0 283.500h688" stroke="#b4c4d8" />
        <rect x="16" width="2" height="360" fill="#fba555" />
        <path d="M18 20l6 6-6 6z" fill="#ff9d42" />
        <g fontFamily="Liberation Sans" fontWeight="bold" fontSize="17" textAnchor="middle" fill="#000">
          {RESTS.map((x) => <text key={x} x={x} y="124">0</text>)}
          {NOTES.map(([x, n, dot]) => (
            <g key={x}>
              <text x={x} y="280">{n}</text>
              {dot && <rect x={x - 1} y="262" width="2" height="2" />}
            </g>
          ))}
        </g>
        <rect x="662" y="276" width="2" height="2" />
        {BEAMS.map(([a, b]) => <path key={a} d={`M${a} 283.500H${b}`} stroke="#000" />)}
        <path d="M402 257c16-15 72-15 89 0" fill="none" stroke="#333" shapeRendering="auto" />
      </svg>
    </div>
  );
}

function VSlider({ label, value, max }: { label: string; value: number; max: number }) {
  return (
    <div className="h-[105px] w-6 flex justify-center py-[5px] border border-t-[#a0a0a0] border-l-[#a0a0a0] border-white">
      <input
        type="range"
        aria-label={label}
        defaultValue={value}
        max={max}
        className="appearance-none bg-transparent w-[14px] h-[92px] [writing-mode:vertical-lr] [direction:rtl] [&::-webkit-slider-runnable-track]:w-1 [&::-webkit-slider-runnable-track]:bg-[#e7eaea] [&::-webkit-slider-runnable-track]:border [&::-webkit-slider-runnable-track]:border-[#d0d0d0] [&::-webkit-slider-thumb]:appearance-none [&::-webkit-slider-thumb]:w-[14px] [&::-webkit-slider-thumb]:h-[6px] [&::-webkit-slider-thumb]:-ml-[6px] [&::-webkit-slider-thumb]:bg-[#0078d7]"
      />
    </div>
  );
}

const BLACK_AFTER = [0, 1, 3, 4, 5];
const KEY_W = 514 / 36;

function Piano() {
  const keys = Array.from({ length: 36 }, (_, i) => i);
  return (
    <svg className="w-[518px] h-[104px] shrink-0" viewBox="0 0 518 104">
      <rect width="518" height="104" fill="#f0ead8" />
      <rect width="516" height="102" fill="#222" />
      {keys.map((i) => {
        const x = 1 + i * KEY_W;
        const octave = Math.floor(i / 7);
        const dots = Math.abs(octave - 2);
        return (
          <g key={i}>
            <rect x={x + 0.5} y="3" width={KEY_W - 1.2} height="98" fill="#fff" />
            <rect x={x + 0.5} y="99" width={KEY_W - 1.2} height="2" fill="#999" />
            <text x={x + 7} y="90" textAnchor="middle" fontSize="11" fontWeight="bold" fontFamily="Noto Sans" fill="#111">{(i % 7) + 1}</text>
            {Array.from({ length: dots }, (_, d) => (
              <rect key={d} x={x + 6} y={octave < 2 ? 93 + d * 3 : 78 - d * 4} width="2" height="2" fill="#333" />
            ))}
          </g>
        );
      })}
      {keys.filter((i) => i < 35 && BLACK_AFTER.includes(i % 7)).map((i) => {
        const x = 1 + (i + 1) * KEY_W - (i % 7 === 0 || i % 7 === 3 ? 6 : 5);
        return (
          <g key={i}>
            <rect x={x - 1} y="2" width="12" height="71" fill="#aaa" />
            <rect x={x} y="2" width="10" height="71" fill="#000" />
            <path d={`M${x + 7.5} 18L${x + 6} 60`} stroke="#2c2c2c" />
            <path d={`M${x + 3} 66.500h5v-3`} stroke="#bbb" fill="none" />
          </g>
        );
      })}
      <text x="202" y="82" fontSize="11" fontFamily="Noto Sans" fill="#111">C</text>
    </svg>
  );
}

const DURATIONS: { label: string; lines?: number; text?: string; on?: boolean }[] = [
  { label: "三十二分", lines: 3 },
  { label: "十六分", lines: 2 },
  { label: "八分", lines: 1 },
  { label: "四分", text: "X", on: true },
  { label: "二分", text: "X–" },
  { label: "附点二分", text: "X- -" },
  { label: "全音符", text: "X---" },
  { label: "附点", text: "·" },
  { label: "双附点", text: "··" },
];

function KeyboardWindow() {
  return (
    <section className="absolute left-[670px] top-[492px] w-[679px] h-[229px] flex flex-col border border-[#7f7f7f] bg-[#f0f0f0] shadow-[0_2px_8px_rgba(0,0,0,0.35)]">
      <div className="h-[30px] shrink-0 flex items-center justify-between pl-2 pr-[7px] bg-white text-[#999]">
        <h2>MIDI 键盘</h2>
        <button aria-label="关闭"><X className="w-4 h-4" strokeWidth={1.500} /></button>
      </div>
      <div className="flex pl-2 pt-[7px]">
        <div className="w-[115px] flex shrink-0">
          {[["滑音", 8192, 16384, "w-[35px]"], ["颤音", 64, 128, "w-[24px]"], ["力度", 127, 128, "w-[24px]"]].map(([t, v, m, w], i) => (
            <div key={t} className={clsx("flex flex-col items-center", w, i === 1 && "ml-[13px]", i === 2 && "ml-[6px]")}>
              <label className="flex flex-col items-center gap-[5px] whitespace-nowrap leading-[20px]">
                {t}
                <input defaultValue={v} className={clsx("h-5 pl-[3px] text-[11px] border border-[#7a7a7a] bg-[#f0f0f0]", w)} />
              </label>
              <div className="pt-[3px]"><VSlider label={String(t)} value={Number(v)} max={Number(m)} /></div>
            </div>
          ))}
        </div>
        <div className="flex-1 flex flex-col pl-1 pr-2">
          <div className="h-5 flex items-center">
            <label htmlFor="current" className="w-[63px]">当前音轨:</label>
            <input id="current" readOnly defaultValue="Track 1" className="w-[276px] h-[18px] text-[11px] border border-t-[#a0a0a0] border-l-[#a0a0a0] border-white" />
            <div className="flex-1 flex justify-between pl-[19px] pr-[9px]">
              <CheckBox label="节拍器" checked />
              <CheckBox label="显示音符" checked />
            </div>
          </div>
          <div className="h-[31px] flex items-center justify-between pb-px pr-px">
            <div className="flex items-center gap-1">
              <label htmlFor="keys">键数:</label>
              <Drop id="keys" value="61" gray small className="w-[51px]" />
            </div>
            <div className="flex items-center gap-px pl-2">
              <label htmlFor="layout">音符布局:</label>
              <Drop id="layout" value="默认" gray className="w-[84px]" />
            </div>
            <CheckBox label="后时值输入" checked />
            <div className="flex items-center gap-px pl-3">
              <label htmlFor="octave">八度升降:</label>
              <input id="octave" defaultValue="0" className="w-6 h-[21px] pl-[3px] text-[11px] border border-[#7a7a7a] bg-[#f0f0f0] mr-[3px]" />
              <Spin narrow />
            </div>
            <button className={clsx(btn, "w-[73px] h-[19px] ml-2")}>乐器</button>
          </div>
          <div className="flex items-start justify-between">
            <button className={clsx(btn, "w-[19px] h-[102px] text-[11px] -ml-1")}>0</button>
            <Piano />
          </div>
        </div>
      </div>
      <div className="flex-1 flex items-center pl-1">
        <label htmlFor="value" className="w-10">时值</label>
        <input id="value" defaultValue="G" className={clsx(field, "w-[47px] h-[20px]")} />
        <div className="flex pl-[27px]">
          {DURATIONS.map((d) => (
            <button
              key={d.label}
              aria-label={d.label}
              className={clsx(
                "h-6 flex flex-col items-center justify-center whitespace-nowrap",
                d.on ? "w-[24px] mr-[3px] ml-[2px] bg-[#d4d4d8] border border-t-[#8f8f8f] border-l-[#8f8f8f] border-white" : "w-[29px]",
              )}
            >
              {d.lines ? (
                <svg className="w-[11px] h-[17px]" viewBox="0 0 11 17" stroke="#000" fill="none">
                  <path d="M2.500 1l6 6M8.500 1l-6 6" />
                  {Array.from({ length: d.lines }, (_, i) => <path key={i} d={`M0 ${10.5 + i * 3}h11`} />)}
                </svg>
              ) : d.text}
            </button>
          ))}
          <button aria-label="三连音" className="w-[29px] h-6 flex items-center justify-center">
            <svg className="w-5 h-3" viewBox="0 0 20 12" fill="none" stroke="#000">
              <path d="M0 9c1-3 3-5 6-5M14 4c3 0 5 2 6 5" />
              <text x="7" y="10" fontSize="11" fontFamily="Liberation Serif" fill="#000" stroke="none">3</text>
            </svg>
          </button>
        </div>
        <div className="flex items-center gap-[6px] pl-[9px]">
          <CheckBox label="和弦" />
          <CheckBox label="输入音符" />
        </div>
        <div className="flex gap-1 pl-[7px]">
          <button className={clsx(btn, "w-[65px] h-[22px]")}>鼠标输入</button>
          <button className={clsx(btn, "w-[65px] h-[22px]")}>键盘输入</button>
        </div>
        <SizeGrip />
      </div>
    </section>
  );
}

function BrowserWindow() {
  return (
    <section className="absolute left-[4px] top-[199px] w-[257px] h-[423px] flex flex-col border border-[#7d8794] bg-[#adb9ce] shadow-[0_3px_10px_rgba(0,0,0,0.4)]">
      <div className="h-[29px] shrink-0 flex items-center pl-2 bg-white text-[#999]">酷特音乐网</div>
      <div className="h-[28px] shrink-0 pl-[3px] pt-[2px]">
        <svg className="w-[17px] h-[17px]" viewBox="0 0 17 17">
          <rect width="17" height="17" fill="#e8dfe4" /><circle cx="9" cy="9" r="8" fill="#c2184f" />
          <path d="M9 4l5 5h-2v4h-2v-3H8v3H6V9H4z" fill="#fff" />
        </svg>
      </div>
      <div className="flex-1 ml-[3px] mr-[3px] flex flex-col justify-end bg-[radial-gradient(ellipse_at_40%_90%,#dfeaf3_0%,transparent_30%),radial-gradient(ellipse_at_75%_100%,#e4eef5_0%,transparent_35%),radial-gradient(ellipse_at_0%_65%,#dfeaf4_0%,transparent_30%),linear-gradient(to_bottom,#a9cfea,#bfdaee_80%,#cfe2f0)]">
        <div className="flex gap-1 pl-[86px] pb-[10px] text-[13px] font-['Liberation_Sans','Noto_Sans_CJK_SC',sans-serif]">
          <a href="#prev" className="text-[#f00]">上页</a>
          <span className="text-[#f00]">1/7</span>
          <a href="#next" className="text-[#555]">下页</a>
        </div>
        <div className="h-[13px] border-t border-dashed border-[#c3c3fb]" />
      </div>
      <div className="h-[4px] flex justify-end"><span className="w-[17px] bg-[#f0f0f0]" /></div>
    </section>
  );
}

// file names mix 12px Chinese with slightly smaller latin letters
function SongName({ name }: { name: string }) {
  return (
    <>
      {name.split(/([A-Za-z.]{2,})/).map((part, i) => (i % 2 ? <span key={i} className="text-[11px]">{part}</span> : part))}
    </>
  );
}

function LibraryDialog() {
  return (
    <section className="absolute left-[20px] top-[107px] w-[307px] h-[451px] flex flex-col border border-[#5c6470] bg-[#adb9ce] shadow-[0_4px_14px_rgba(0,0,0,0.5)]">
      <div className="h-[30px] shrink-0 flex items-center justify-between pl-2 pr-[7px] bg-white">
        <h2>歌曲库</h2>
        <button aria-label="关闭"><X className="w-4 h-4" strokeWidth={1.500} /></button>
      </div>
      <div className="h-[34px] shrink-0 flex items-center pl-2 pt-1">
        <span className="w-[100px] pt-px">曲库文件夹：</span>
        <div className="flex gap-[7px]">
          <button className={clsx(btn, "w-[75px] h-[21px]")}>打开文件夹</button>
          <button className={clsx(btn, "w-[75px] h-[21px]")}>打开文件</button>
        </div>
      </div>
      <div className="flex-1 min-h-0 flex items-start pl-2 gap-[7px]">
        <div className="w-[92px] flex flex-col gap-[7px]">
          <ul role="listbox" aria-label="曲库文件夹" className="h-[197px] p-[2px] bg-white border border-[#828790] leading-[13px] overflow-hidden">
            {FOLDERS.map((f, i) => (
              <li key={f} role="option" aria-selected={i === 0} className={clsx("h-[13px] pl-px whitespace-nowrap overflow-hidden", i === 0 && "bg-[#0078d7] text-white text-[11px] font-['Roboto',sans-serif]")}>{f}</li>
            ))}
          </ul>
          <div className="flex flex-col gap-[5px] px-px">
            {["添加曲库", "删除曲库", "上移", "下移", "存入当前曲库"].map((t, i) => (
              <button key={t} className={twMerge(btn, "h-[21px]", i === 0 && "border-2 border-[#0078d7]")}>{t}</button>
            ))}
          </div>
        </div>
        <div className="w-[189px] h-[377px] flex p-[2px] bg-white border border-[#828790]">
          <ul role="listbox" aria-label="歌曲" className="flex-1 min-w-0 leading-[13px] overflow-hidden">
            {SONGS.map((s, i) => (
              <li key={s} role="option" aria-selected={i === 0} className={clsx("h-[13px] whitespace-nowrap overflow-hidden", i === 0 && "bg-[#0078d7] text-white")}>
                <SongName name={s} />
              </li>
            ))}
          </ul>
          <VScroll thumb="h-[316px] bg-[#a9a9a9]" />
        </div>
      </div>
      <div className="h-[9px] flex justify-end"><SizeGrip /></div>
    </section>
  );
}
